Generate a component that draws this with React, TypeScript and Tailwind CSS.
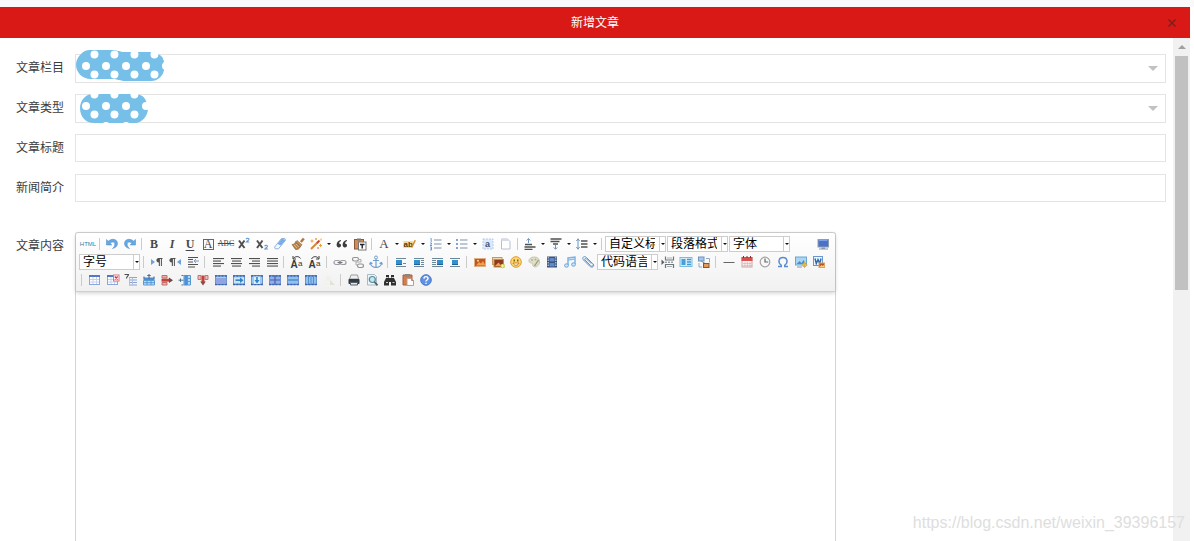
import { useId } from "react";
import type { ReactNode } from "react";

type ToolItem =
  | { kind: "button"; label: string; icon: ReactNode; menu?: boolean }
  | { kind: "separator" }
  | { kind: "select"; label: string; options: string[] };

const button = (label: string, icon: ReactNode, menu = false): ToolItem => ({
  kind: "button",
  label,
  icon,
  menu,
});
const separator: ToolItem = { kind: "separator" };
const select = (label: string, options: string[]): ToolItem => ({
  kind: "select",
  label,
  options,
});

function Svg({ children }: { children: ReactNode }) {
  return (
    <svg viewBox="0 0 16 16" className="size-4 shrink-0" fill="none" aria-hidden="true">
      {children}
    </svg>
  );
}

function Glyph({ children, className = "" }: { children: ReactNode; className?: string }) {
  return (
    <span className={`font-['Liberation_Serif',serif] leading-4 text-[#484848] ${className}`}>
      {children}
    </span>
  );
}

const DARK = "#505050";

function AlignIcon({ lines }: { lines: [number, number][] }) {
  return (
    <Svg>
      {lines.map(([x, w], i) => (
        <rect key={i} x={x} y={4 + i * 2.5} width={w} height="1.1" fill={DARK} />
      ))}
    </Svg>
  );
}

function FloatIcon({ x, lines }: { x: number; lines: [number, number, number][] }) {
  return (
    <Svg>
      {lines.map(([lx, ly, w], i) => (
        <rect key={i} x={lx} y={ly} width={w} height="1" fill="#6d8798" />
      ))}
      <rect x={x} y="6" width="6" height="5" fill="#2f92cf" />
      <rect x={x} y="10" width="6" height="1" fill="#1f5f94" />
    </Svg>
  );
}

function TableIcon({ mark }: { mark?: ReactNode }) {
  return (
    <Svg>
      <rect x="2.500" y="3.500" width="10" height="9" fill="#fff" stroke="#8ea8de" />
      <path d="M2 4h11" stroke="#5577c8" strokeWidth="2" />
      <path d="M3 7.500h9M3 10h9M6 5v7M9.500 5v7" stroke="#c5d2ee" />
      {mark}
    </Svg>
  );
}

function CellIcon({ fill = "#9cc9f0", children }: { fill?: string; children?: ReactNode }) {
  return (
    <Svg>
      <rect x="2.500" y="3.500" width="11" height="9" fill={fill} stroke="#6f93cc" />
      <path d="M2 4h12M2 12.500h12" stroke="#3f63ae" strokeWidth="1.600" strokeDasharray="2.300 .9" />
      {children}
    </Svg>
  );
}

function ListIcon({ numbered = false }: { numbered?: boolean }) {
  return (
    <Svg>
      <path d="M6 4h7.500M6 8h7.500M6 12h7.500" stroke="#7f93ab" />
      {numbered ? (
        <path d="M2.500 2.500h.7V6M2 7h1.500v1.200L2 9.500h2M2 11h1.500v3H2M2.600 12.500h1" stroke="#5b8fd0" strokeWidth=".9" />
      ) : (
        <path d="M2 4h2M2 8h2M2 12h2" stroke="#5b86c0" strokeWidth="1.600" />
      )}
    </Svg>
  );
}

const curvedArrow = (
  <path
    d="M2.500 3.500v5.500h5.300L6.200 7.300C8.200 5.300 10.800 5.800 10.800 8.300c0 1.700-.8 3-2.300 4.200 3.200-.6 5-2.600 5-5C13.500 3.300 8.200 1.800 4.300 5.200z"
    fill="#64a8e4"
    stroke="#4488cc"
    strokeWidth=".5"
  />
);

const smallTwo = <path d="M10.200 3.200c.5-1.400 2.900-1.100 2.700.3-.1 1-1.800 1.400-2.500 2.500h2.900" stroke="#5f95cb" strokeWidth="1.100" />;

const firstRow: ToolItem[] = [
  button("源代码", <span className="font-['Liberation_Sans',sans-serif] text-[6px] leading-4 text-[#2f86ad]">HTML</span>),
  separator,
  button("撤销", <Svg>{curvedArrow}</Svg>),
  button("重做", <Svg><g transform="matrix(-1 0 0 1 16 0)">{curvedArrow}</g></Svg>),
  separator,
  button("加粗", <Glyph className="text-[12px] font-bold">B</Glyph>),
  button("斜体", <Glyph className="text-[12px] font-bold italic">I</Glyph>),
  button("下划线", <Glyph className="text-[12px] font-bold underline underline-offset-2">U</Glyph>),
  button("字符边框", <span className="flex size-[11px] items-center justify-center border border-[#666]"><Glyph className="text-[12px]">A</Glyph></span>),
  button("删除线", <Glyph className="text-[8px] line-through">ABC</Glyph>),
  button("上标", <Svg><path d="m3 4.500 5.500 7.500M8.500 4.500 3 12" stroke={DARK} strokeWidth="2" />{smallTwo}</Svg>),
  button("下标", <Svg><path d="m3 4.500 5.500 7.500M8.500 4.500 3 12" stroke={DARK} strokeWidth="2" /><g transform="translate(.5 7)">{smallTwo}</g></Svg>),
  button("清除格式", <Svg><path d="M9.500 2.500h3.300l.7 1.700-7 8.600H3.300l-.8-1.700z" fill="#f3f8ff" stroke="#8fb2df" /><path d="m9.700 2.500 3.800 1.500-4.500 5.500-3.500-1.600z" fill="#79ace8" /></Svg>),
  button("格式刷", <Svg><path d="M13.800 2.500 10.900 6" stroke="#b27435" strokeWidth="2.400" /><path d="m7 4.500 5 4.200-1.500 1.700-5-4.400z" fill="#c7915a" stroke="#8d5b2c" strokeWidth=".6" /><path d="m5.500 6 5 4.400C9.500 13 7.500 13.700 5.500 13.500L2 8.500c2 0 3-1.300 3.500-2.500" fill="#b8824e" stroke="#805c35" strokeWidth=".6" /><path d="m4 8.700 3 3.500M6 8l2.800 2.900" stroke="#e7c697" strokeWidth=".8" /></Svg>),
  button("自动排版", <Svg><path d="m3 13 7-7" stroke="#d88636" strokeWidth="2" /><path d="m9 7 2.500-2.500" stroke="#d24830" strokeWidth="2" /><path d="M4 3.500v3M2.500 5h3M8 2v2M7 3h2M12.500 8v3M11 9.500h3M13 2.500v2" stroke="#eda03a" /><path d="M9 12h2" stroke="#d65a37" /></Svg>, true),
  button("引用", <Svg><path d="M7 4C4.500 4.300 2.600 6 2.600 8.800c0 1.700 1 2.700 2.300 2.700 1.200 0 2.100-.8 2.100-2s-.8-1.900-1.900-1.900C5 6.500 5.800 5.300 7 5zM13 4c-2.500.3-4.400 2-4.400 4.800 0 1.700 1 2.700 2.300 2.700 1.200 0 2.100-.8 2.100-2s-.8-1.900-1.900-1.900c-.1-1.100.7-2.300 1.900-2.600z" fill="#3c3c3c" /></Svg>),
  button("纯文本粘贴", <Svg><rect x="2.500" y="3.500" width="9" height="9.500" fill="#d28d55" stroke="#8c5835" /><path d="M5 2.500h4v2H5z" fill="#777" /><rect x="6.500" y="6" width="7.500" height="8" fill="#fff" stroke="#777" /><path d="M8 8.500h4.500M10.200 8.500v4" stroke="#222" strokeWidth="1.400" /></Svg>),
  separator,
  button("字体颜色", <Glyph className="text-[13px]">A</Glyph>, true),
  button("背景色", <Svg><rect x="1.500" y="5" width="9.500" height="7" fill="#f6da92" /><text x="1.500" y="11" fontSize="8" fontWeight="bold" fontFamily="Liberation Sans, sans-serif" fill="#4a3a20">ab</text><path d="m14 4.500-3 6-1.500 1.500.2-2.300L12.500 4z" fill="#d58a32" /></Svg>, true),
  button("有序列表", <ListIcon numbered />, true),
  button("无序列表", <ListIcon />, true),
  button("全选", <Svg><rect x="3" y="3" width="10" height="10" fill="#dceaff" stroke="#b5cbe9" strokeDasharray="2 1" /><text x="5" y="11" fontSize="9" fontWeight="bold" fontFamily="Liberation Sans, sans-serif" fill="#3b5376">a</text></Svg>),
  button("清空文档", <Svg><path d="M3.500 3h6l2.500 2.500V13H3.500z" fill="#fff" stroke="#b8bfd0" /><path d="M3.500 3h7v2h-7z" fill="#d5dbe9" /></Svg>),
  separator,
  button("段前距", <Svg><path d="M6.500 7V2.500M4.700 4.500 6.500 2.600l1.800 1.900" stroke="#6b96c4" /><path d="M3 8.500h7M2.500 11h11M2.500 13.300h8" stroke={DARK} strokeWidth="1.300" /></Svg>, true),
  button("段后距", <Svg><path d="M2.500 3h11M2.500 5.500h9M5 8h5" stroke={DARK} strokeWidth="1.300" /><path d="M7.500 9v4M5.700 11.400l1.800 1.900 1.800-1.900" stroke="#6b96c4" /></Svg>, true),
  button("行间距", <Svg><path d="M4 2.500v11M2.300 5 4 3l1.700 2M2.300 11 4 13l1.700-2" stroke="#6b96c4" /><path d="M7 5h6.500M7 8h6.500M7 11h6.500" stroke={DARK} strokeWidth="1.300" /></Svg>, true),
  separator,
  select("自定义标题", ["自定义标题"]),
  select("段落格式", ["段落格式", "段落", "标题 1"]),
  select("字体", ["字体", "宋体", "微软雅黑"]),
];

const fullscreen = button(
  "全屏",
  <Svg><rect x="3" y="3.500" width="10.500" height="7.500" fill="#4a72c9" stroke="#8f9db1" /><path d="M4 4.500h8.500" stroke="#7ca1eb" /><path d="M6.500 11.500h3.500v1H13v1H4v-1h2.500z" fill="#8c98a9" /></Svg>,
);

const caseIcon = (flip: boolean) => (
  <Svg>
    <text x="1.500" y="14" fontSize="10" fontWeight="bold" fontFamily="Liberation Sans, sans-serif" fill="#3a3a3a">A</text>
    <text x="9" y="11.500" fontSize="8" fontFamily="Liberation Sans, sans-serif" fill="#3a3a3a">a</text>
    <path d={flip ? "M4.500 5C6 2 9.500 2 11.500 4.300M12 2v3H9" : "M11.500 4.500C10 2 6.500 2 4.500 4.300M4 2v3h3"} stroke="#3a3a3a" />
  </Svg>
);

const paragraphDirection = (rtl: boolean) => (
  <Svg>
    <path d={rtl ? "m14 5-4 3 4 3z" : "m2 5 4 3-4 3z"} fill="#6da0dc" />
    <g transform={rtl ? "translate(-5 0)" : undefined}>
      <path d="M13.500 4H9.800C6.600 4 6.600 8.500 9.800 8.500V12h1.100V5h1V12h1V5h.6z" fill={DARK} />
    </g>
  </Svg>
);

const secondRow: ToolItem[] = [
  select("字号", ["字号", "12px", "14px", "16px"]),
  separator,
  button("从左向右输入", paragraphDirection(false)),
  button("从右向左输入", paragraphDirection(true)),
  button("首行缩进", <Svg><path d="M3 3.500h10M3 5.500h5M3 8h5M3 10.500h10M3 13h7" stroke={DARK} /><path d="M9 7h5M11 5 9 7l2 2" stroke="#7898bf" /></Svg>),
  separator,
  button("居左对齐", <AlignIcon lines={[[3, 11], [3, 8], [3, 11], [3, 8]]} />),
  button("居中对齐", <AlignIcon lines={[[3, 11], [4, 9], [3, 11], [4, 9]]} />),
  button("居右对齐", <AlignIcon lines={[[3, 11], [6, 8], [3, 11], [6, 8]]} />),
  button("两端对齐", <AlignIcon lines={[[3, 11], [3, 11], [3, 11], [3, 11]]} />),
  separator,
  button("字母大写", caseIcon(false)),
  button("字母小写", caseIcon(true)),
  separator,
  button("超链接", <Svg><rect x="2" y="6.500" width="6" height="4" rx="2" stroke="#9a9da1" strokeWidth="1.200" /><rect x="8" y="6.500" width="6" height="4" rx="2" stroke="#9a9da1" strokeWidth="1.200" /><path d="M5.500 8.500h5" stroke="#777" strokeWidth="1.200" /></Svg>),
  button("取消链接", <Svg><rect x="2.500" y="3.500" width="6" height="3.500" rx="1.700" stroke="#929292" strokeWidth="1.200" /><rect x="7.500" y="10" width="6" height="3.500" rx="1.700" stroke="#929292" strokeWidth="1.200" /><path d="M8 5.500h3v2.500H6V11h2" stroke="#aaa" /></Svg>),
  button("锚点", <Svg><circle cx="8" cy="3.500" r="1.500" stroke="#6f9fce" /><path d="M8 5v8.500M5 6.500h6M2.500 8.500c0 3 2.500 5 5.500 5s5.500-2 5.500-5M1.500 10.500l1-2 2 1M14.500 10.500l-1-2-2 1" stroke="#6f9fce" strokeWidth="1.200" /></Svg>),
  separator,
  button("左浮动", <FloatIcon x={3} lines={[[3, 4, 10], [10, 9, 3], [3, 12, 10]]} />),
  button("默认", <FloatIcon x={3} lines={[[3, 4, 10], [10, 6, 3], [10, 8, 3], [10, 10, 3], [3, 12, 10]]} />),
  button("右浮动", <FloatIcon x={8} lines={[[3, 4, 11], [3, 6, 4], [3, 8, 4], [3, 10, 4], [3, 12, 11]]} />),
  button("居中", <FloatIcon x={5} lines={[[3, 4, 10], [3, 12, 10]]} />),
  separator,
  button("单图上传", <Svg><rect x="2.500" y="4.500" width="11" height="8" fill="#c45425" stroke="#dcb285" /><path d="M4 11.500 7 8l2 1.500L11 7l2.500 4.500z" fill="#f0a24d" /><circle cx="6" cy="6.800" r="1" fill="#ffd887" /></Svg>),
  button("多图上传", <Svg><rect x="2.500" y="3.500" width="9.500" height="7" fill="#f3d9ae" stroke="#c29a68" /><rect x="4" y="5.500" width="9.500" height="7.500" fill="#8d3a1e" stroke="#ca8c48" /><path d="m5 12 3.500-3.500 3 3.500z" fill="#f0a24d" /><circle cx="12.700" cy="12" r="2.300" fill="#b3c732" /><path d="M11 12h3.500M12.700 10.300v3.500" stroke="#fff7a8" /></Svg>),
  button("表情", <Svg><circle cx="8" cy="8" r="5.300" fill="#ffd76a" stroke="#e09a38" /><path d="M6.200 5.500v2M9.800 5.500v2" stroke="#6c4312" strokeWidth="1.200" /><path d="M5 9c1 3 5 3 6 0z" fill="#fff" stroke="#a86a1d" strokeWidth=".8" /></Svg>),
  button("涂鸦", <Svg><path d="M8.500 3C5 3 2.500 5 3 7.500c.4 1.800 2.600 1 3.500 2 .8 1-.4 2 1 3 2.500 1.400 6-1 6-4.500 0-3-2-5-5-5" fill="#dddfc9" stroke="#c3c5b2" /><circle cx="6" cy="6" r="1" fill="#d0aa76" /><circle cx="9.500" cy="5.500" r="1" fill="#9fc187" /><path d="m12.500 6-4 6" stroke="#99967a" strokeWidth="1.300" /></Svg>),
  button("视频", <Svg><rect x="3" y="2.500" width="10" height="11" fill="#36517d" /><path d="M4.200 3v10M11.800 3v10" stroke="#c2d2e9" strokeWidth="1.200" strokeDasharray="1.500 1" /><path d="M5.500 4h5v3.500h-5zM5.500 9h5v3.500h-5z" fill="#6489c4" /></Svg>),
  button("音乐", <Svg><path d="M6 11V4l7-1v7" stroke="#7eb3e6" strokeWidth="1.500" /><path d="M6 6 13 5" stroke="#8abef0" strokeWidth="1.300" /><ellipse cx="4.500" cy="11.500" rx="2" ry="1.700" fill="#c3e1fb" stroke="#6ea9de" /><ellipse cx="11.500" cy="10.500" rx="2" ry="1.700" fill="#c3e1fb" stroke="#6ea9de" /></Svg>),
  button("附件", <Svg><path d="m5 6 5.500 5.600c2 1.800 3.700-.4 2.200-2L6.300 3.400C4 1.200 1.500 4 3.500 6l6 6c2.500 2.500 5.500.3 3.500-2.200M5 6c-.9-1 .3-2.200 1.300-1.300l5 5" stroke="#5f92cc" strokeWidth="1" /></Svg>),
  select("代码语言", ["代码语言", "HTML", "JavaScript"]),
  button("分页", <Svg><path d="M5.500 2.500v3.500h8V2.500M5.500 14v-3.500h8V14" stroke="#6e767c" strokeWidth="1.200" /><path d="M7 4h5M7 12.500h5" stroke="#a9b0b5" /><path d="M5 8.200h9" stroke="#6e767c" strokeDasharray="2 1" /><path d="m1.500 5.500 3 2.700-3 2.700z" fill="#5c6165" /></Svg>),
  button("模板", <Svg><rect x="2" y="3.500" width="12" height="9" fill="#d5edfb" stroke="#7cbbe0" /><path d="M3.500 5h4v6h-4z" fill="#489fd8" /><path d="M9 5.500h4M9 8h4M9 10.500h4" stroke="#439bd0" strokeWidth="1.300" /></Svg>),
  button("背景", <Svg><rect x="2.500" y="3" width="5.500" height="4" fill="#a9c6ea" stroke="#6f93c2" /><path d="M10 4.500h3.500v4M3 9v4h3" stroke="#8fa9cc" /><path d="m5 7 5 3" stroke="#7b91a8" /><rect x="7.500" y="9.500" width="5.500" height="4" fill="#e19a58" stroke="#8d512b" /></Svg>),
  separator,
  button("分隔线", <Svg><path d="M2.500 8.500h11" stroke="#666" /></Svg>),
  button("日期", <Svg><rect x="3" y="3.500" width="10" height="9.500" fill="#fbf3f3" stroke="#c9a3a3" /><path d="M2.500 3h11v4h-11z" fill="#d9504e" /><path d="M4.500 2v2M8 2v2M11.500 2v2" stroke="#7e3232" /><path d="M4 9.500h8.500M4 11.500h8.500M6 8v5M8.500 8v5M11 8v5" stroke="#ddb1b1" strokeWidth=".7" /></Svg>),
  button("时间", <Svg><circle cx="8" cy="8" r="4.800" fill="#f8f8f8" stroke="#a3a3a3" strokeWidth="1.200" /><path d="M8 4.500V8h3.200" stroke="#666" strokeWidth="1.200" /></Svg>),
  button("特殊字符", <Svg><path d="M3 12.500h3.300v-1.300C2.500 8.500 3.500 3.500 8 3.500s5.500 5 1.700 7.700v1.300H13" stroke="#5a8bd0" strokeWidth="1.400" /></Svg>),
  button("截图", <Svg><rect x="2.500" y="3" width="11" height="8" fill="#a8d6f4" stroke="#6ba5d2" /><path d="m3.500 10 3-3 2 2 2-3 2.500 4z" fill="#4b91c9" /><path d="M4 13h5" stroke="#9fb4c5" strokeWidth="1.400" /><circle cx="11.500" cy="11" r="1.800" fill="#f2d894" stroke="#c7a55a" /><path d="M11.500 8v6M8.500 11h6" stroke="#d9b355" /></Svg>),
  button("Word图片转存", <Svg><rect x="2.500" y="2.500" width="9" height="9" fill="#eef5ff" stroke="#6a98cd" /><path d="m4 4.500 1.300 5L7 5.500l1.700 4 1.300-5" stroke="#2d67ae" strokeWidth="1.400" /><rect x="8" y="9" width="5.500" height="4.500" fill="#b95627" stroke="#e2a05d" /><path d="m8.500 13 2-2 1 1 1-1 1 2z" fill="#ffd07d" /></Svg>),
];

const thirdRow: ToolItem[] = [
  separator,
  button("插入表格", <TableIcon />),
  button("删除表格", <TableIcon mark={<g><rect x="8.500" y="3" width="5.500" height="6" fill="#fff" stroke="#dc7480" /><path d="m9.700 4.500 3 3m0-3-3 3" stroke="#d82f48" strokeWidth="1.300" /></g>} />),
  button("表格前插入行", <Svg><path d="M1.500 2.500h4c-.3 2-2 2-2 4" stroke={DARK} strokeWidth="1.200" /><path d="M6 5.500h8M6 8h8M6 10.500h8M6 13h8" stroke="#8aa3cf" /><path d="M6.500 5.500V13M9.500 5.500V13" stroke="#aebfe0" /></Svg>),
  button("前插入行", <Svg><path d="M2.500 5.500h11v3h-11z" fill="#4a8fd6" /><path d="M2.500 8.500h11v4.500h-11z" fill="#b9dcfa" stroke="#5f9cd6" /><path d="M6 8v5M10 8v5M2 10.700h12" stroke="#5798d0" /><path d="M8 7V2M6.300 3.500h3.400M3 4.500v2M13 4.500v2" stroke="#4f6781" /></Svg>),
  button("删除行", <Svg><path d="M3 3.500h5v2.500H3zM3 10.500h5V13H3z" fill="#eeb0a8" stroke="#c26f66" /><path d="M2.500 8.200h8" stroke="#c4413c" strokeWidth="3" /><path d="m10 5.500 4 2.700-4 2.800z" fill="#6f4a45" /></Svg>),
  button("前插入列", <Svg><path d="M7 3.500h6.500v9.500H7z" fill="#b0dcff" stroke="#5798d0" /><path d="M7.500 3.500h2.500v9.500H7.500z" fill="#4a8fd6" /><path d="M7 6.500h6M7 9.500h6M10.500 3v10" stroke="#5798d0" /><path d="M1.500 8.200h5M3.500 6.500v3.400M4.500 3.500h2M4.500 13h2" stroke="#4f7397" /></Svg>),
  button("删除列", <Svg><path d="M3 3.500h3v4H3zM10 3.500h3v4h-3z" fill="#f0bcb7" stroke="#c2766f" /><path d="M8 3.500v7" stroke="#c4413c" strokeWidth="3" /><path d="m5.200 9.500 2.800 4 2.800-4z" fill="#8d4a44" /></Svg>),
  button("合并多个单元格", <CellIcon><rect x="3" y="5" width="10" height="7" fill="#8fa5e0" /><path d="M3 5.500h10" stroke="#b7c5ef" /></CellIcon>),
  button("右合并单元格", <CellIcon><rect x="3" y="5.500" width="10" height="5.500" fill="#c9e6fa" /><path d="M4.500 8.200h6" stroke="#2c84c8" strokeWidth="1.600" /><path d="m9 5.500 3.500 2.700L9 11z" fill="#2c84c8" /></CellIcon>),
  button("下合并单元格", <CellIcon><rect x="5" y="4.500" width="6" height="7.500" fill="#d7edfb" /><path d="M8 5v4" stroke="#2c84c8" strokeWidth="1.600" /><path d="m5.500 8 2.500 3.500L10.500 8z" fill="#2c84c8" /></CellIcon>),
  button("完全拆分单元格", <CellIcon fill="#93aee6"><path d="M8 4v8M3 8h10" stroke="#4463b4" strokeWidth="1.200" /></CellIcon>),
  button("拆分成行", <CellIcon fill="#8fc0ee"><path d="M3 8h10" stroke="#4182c8" strokeWidth="1.200" /></CellIcon>),
  button("拆分成列", <CellIcon fill="#8fc0ee"><path d="M5.500 5v7M8 5v7M10.500 5v7" stroke="#4f92d2" /></CellIcon>),
  button("图表", <Svg><path d="M3 11.500h5v1H3zM5 4h3l2 2v3H5z" fill="#f0f0ed" /><path d="m9 8 2 2 3 3H9z" fill="#e2e2d6" /></Svg>),
  separator,
  button("打印", <Svg><path d="M5 3h6.500l1 4h-9z" fill="#eef0f2" stroke="#999" /><rect x="2.500" y="7" width="11" height="5" rx=".7" fill="#333b43" /><path d="M4.500 10.500h7V13h-7z" fill="#dfe5ea" stroke="#56616b" /></Svg>),
  button("预览", <Svg><path d="M3.500 2.500h7l2 2V13h-9z" fill="#edf3f8" stroke="#a9bac6" /><circle cx="8.300" cy="7.500" r="3" fill="#c3e7ed" stroke="#538c9a" strokeWidth="1.200" /><path d="m10.500 10 3 3.300" stroke="#4d6269" strokeWidth="1.800" /></Svg>),
  button("查询替换", <Svg><path d="M4 3h3v3h2V3h3v3l2 4v3.500H9V10H7v3.500H2V10l2-4z" fill="#303030" /><path d="M4 10.500h2M10.500 10.500h2M4 5.500h2.500M9.500 5.500H12" stroke="#ccc" /></Svg>),
  button("粘贴", <Svg><path d="M3 3h9v10H3z" fill="#d17d4c" stroke="#a9613c" /><path d="M5 2h5v2.500H5z" fill="#868686" /><path d="M7 6.500h4.500l2 2v5H7z" fill="#fff" stroke="#c99a89" /><path d="M11.500 6.500v2h2" stroke="#b98370" /></Svg>),
  button("帮助", <Svg><circle cx="8" cy="8" r="5.300" fill="#5f92e3" stroke="#4877c6" /><path d="M6 6.700c0-3 4-2.500 4-.3 0 1.600-2 1.500-2 3.100M8 10.700v1.200" stroke="#fff" strokeWidth="1.400" /></Svg>),
];

function MenuArrow() {
  return (
    <svg viewBox="0 0 4 2" className="h-0.5 w-1" aria-hidden="true">
      <path d="M0 0h4L2 2z" fill="#111" />
    </svg>
  );
}

function Tool({ item, narrow }: { item: ToolItem; narrow?: boolean }) {
  if (item.kind === "separator") {
    return (
      <span className={`flex h-4 shrink-0 items-center pl-0.5 ${narrow ? "w-1.5" : "w-[7px]"}`}>
        <span className="h-3 w-px bg-[#cbcbcb]" />
      </span>
    );
  }
  if (item.kind === "select") {
    return (
      <span className="relative mr-px flex h-4 w-[61px] shrink-0 border border-[#cdcdcd] bg-white">
        <select
          aria-label={item.label}
          className="w-full appearance-none overflow-hidden bg-transparent pl-[3px] pr-[10px] text-[12px] leading-[14px] text-black outline-none"
        >
          {item.options.map((option) => (
            <option key={option}>{option}</option>
          ))}
        </select>
        <span className="pointer-events-none absolute inset-y-0 right-0 flex w-1.5 items-center justify-center border-l border-[#cdcdcd]">
          <MenuArrow />
        </span>
      </span>
    );
  }
  return (
    <button type="button" aria-label={item.label} title={item.label} className="flex h-[18px] shrink-0 items-center">
      <span className="flex w-[18px] items-center justify-center">{item.icon}</span>
      {item.menu && (
        <span className="flex w-2 justify-center">
          <MenuArrow />
        </span>
      )}
    </button>
  );
}

function ToolRow({ items, narrow, end }: { items: ToolItem[]; narrow?: boolean; end?: ToolItem }) {
  return (
    <div className="flex h-[18px] items-center">
      {items.map((item, i) => (
        <Tool key={i} item={item} narrow={narrow} />
      ))}
      {end && <span className="ml-auto"><Tool item={end} /></span>}
    </div>
  );
}

/** Polka-dotted blob that hides the value beneath it. */
function DotMask({ shape, viewBox, className }: { shape: string; viewBox: string; className: string }) {
  const id = useId();
  return (
    <svg viewBox={viewBox} className={`pointer-events-none absolute ${className}`} aria-hidden="true">
      <defs>
        <pattern id={id} width="20" height="20" patternUnits="userSpaceOnUse">
          <rect width="20" height="20" fill="#75bfe8" />
          <circle cx="10" cy="16" r="4" fill="#fff" />
          <circle cx="18.500" cy="4.500" r="4" fill="#fff" />
          <circle cx="-1.500" cy="4.500" r="4" fill="#fff" />
        </pattern>
      </defs>
      <path d={shape} fill={`url(#${id})`} />
    </svg>
  );
}

function Field({ label, type, mask }: { label: string; type: "select" | "text"; mask?: ReactNode }) {
  const id = useId();
  return (
    <div className="flex h-10">
      <label htmlFor={id} className="w-[75px] shrink-0 pl-4 text-[12px] leading-7 text-[#3c3c3c]">{label}</label>
      <div className="relative h-7 min-w-0 flex-1">
        {type === "select" ? (
          <>
            <select id={id} className="h-[29px] w-full appearance-none border border-[#e4e4e4] bg-white px-2.5 text-[12px] outline-none">
              <option value="" />
            </select>
            <svg viewBox="0 0 10 5" className="pointer-events-none absolute right-2 top-3 h-[5px] w-2.5" aria-hidden="true">
              <path d="M0 0h10L5 5z" fill="#c2c2c2" />
            </svg>
          </>
        ) : (
          <input id={id} type="text" className="h-7 w-full border border-[#e4e4e4] bg-white px-2.5 text-[12px] outline-none" />
        )}
        {mask}
      </div>
    </div>
  );
}

export default function App() {
  return (
    <div className="relative flex h-screen flex-col overflow-hidden bg-white pr-1 pt-[7px] font-['Liberation_Sans','Noto_Sans_CJK_SC',sans-serif]">
      <div className="absolute inset-x-0 top-0 h-[7px] bg-[#f9f9fb]" />
      <header className="relative flex h-[31px] shrink-0 items-center justify-center bg-[#d91916]">
        <h1 className="text-[12px] leading-7 text-white">新增文章</h1>
        <button type="button" aria-label="关闭" className="absolute right-3 top-2.5 flex size-3 items-center justify-center">
          <svg viewBox="0 0 8 8" className="size-2" aria-hidden="true"><path d="m.5.5 7 7m0-7-7 7" stroke="#75201f" strokeWidth="1.300" /></svg>
        </button>
      </header>

      <div className="flex min-h-0 flex-1">
        <main className="flex min-w-0 flex-1 flex-col pr-[7px] pt-4">
          <Field
            label="文章栏目"
            type="select"
            mask={<DotMask viewBox="0 0 90 32" className="-top-1 left-px h-8 w-[90px]" shape="M14 0h22c6 0 7 2 13 2h26c5 0 9 2 12 6-1 1 1 2 1 3 0 2-2 3-1 5s2 1 1 4c-1 6-6 11-13 11H50c-6 0-8-2-14-2H15C6 29 0 22 0 15S6 0 14 0z" />}
          />
          <Field
            label="文章类型"
            type="select"
            mask={<DotMask viewBox="4 4 69 32" className="left-[5px] top-0 h-8 w-[69px]" shape="M17 4h42c5 0 9 2 11 7l2 7c0 8-6 15-13 15H18C10 33 4 27 4 18 4 10 10 4 17 4z" />}
          />
          <Field label="文章标题" type="text" />
          <Field label="新闻简介" type="text" />

          <div className="mt-[18px] flex min-h-0 flex-1">
            <span id="content-label" className="w-[75px] shrink-0 pl-4 text-[12px] leading-7 text-[#3c3c3c]">文章内容</span>
            <section aria-labelledby="content-label" className="flex w-[761px] flex-col rounded-t-[3px] border border-b-0 border-[#d4d4d4] bg-white">
              <div role="toolbar" aria-label="编辑工具" className="relative shrink-0 rounded-t-[3px] border-b border-[#cfcfcf] bg-linear-to-b from-white to-[#f1f1f1] px-[3px] py-0.5 shadow-[0_1px_4px_rgba(0,0,0,0.2)]">
                <ToolRow items={firstRow} narrow end={fullscreen} />
                <ToolRow items={secondRow} />
                <ToolRow items={thirdRow} />
              </div>
              <textarea aria-labelledby="content-label" className="min-h-0 w-full flex-1 resize-none bg-white p-2 text-[14px] outline-none" />
            </section>
          </div>
        </main>

        <div aria-hidden="true" className="flex w-[17px] shrink-0 flex-col items-center bg-[#f1f1f1]">
          <div className="flex h-[18px] items-center justify-center">
            <svg viewBox="0 0 8 4" className="h-1 w-2"><path d="M0 4h8L4 0z" fill="#a0a0a0" /></svg>
          </div>
          <div className="h-[234px] w-[13px] bg-[#c1c1c1]" />
        </div>
      </div>

      <p className="pointer-events-none absolute bottom-1.5 right-[9px] text-[16px] leading-6 text-[#dedede]">https://blog.csdn.net/weixin_39396157</p>
    </div>
  );
}
